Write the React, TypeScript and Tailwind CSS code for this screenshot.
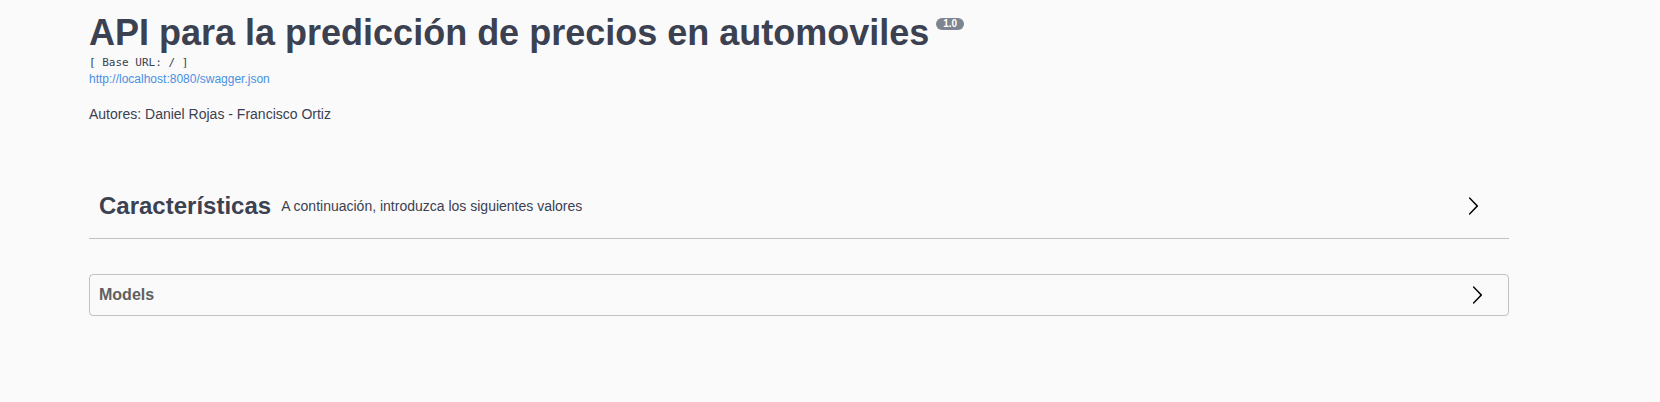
import React from 'react'

const sans = "font-['Liberation_Sans',Arial,sans-serif]"

function Chevron() {
  return (
    <svg width="20" height="20" viewBox="0 0 20 20" className="shrink-0">
      <path
        fill="#000"
        d="M13.25 10L6.109 2.58a.697.697 0 0 1 0-.979.68.68 0 0 1 .969 0l7.83 7.908a.697.697 0 0 1 0 .979l-7.83 7.908a.68.68 0 0 1-.969 0 .697.697 0 0 1 0-.979L13.25 10z"
      />
    </svg>
  )
}

export default function App() {
  return (
    <div className={`min-h-[402px] bg-[#fafafa] ${sans} text-[#3b4151]`}>
      <div className="ml-[89px] w-[1420px] pt-[12px]">
        {/* Info */}
        <div>
          <h2 className="flex items-start text-[36px] leading-[41px] font-bold m-0">
            <span>API para la predicción de precios en automoviles</span>
            <span className="ml-[7px] mt-[6px] h-[12px] rounded-full bg-[#7d8492] px-[7px] text-[10px] leading-[12px] text-white font-bold">
              1.0
            </span>
          </h2>
          <pre className="mt-[1px] font-['DejaVu_Sans_Mono','Liberation_Mono',monospace] text-[11px] leading-[17px] text-[#3b4151]">
            [ Base URL: / ]
          </pre>
          <a className="block text-[12px] leading-[16px] text-[#4990e2]">
            http://localhost:8080/swagger.json
          </a>
          <p className="mt-[19px] text-[14px] leading-[16px]">Autores: Daniel Rojas - Francisco Ortiz</p>
        </div>

        {/* Tag section */}
        <div className="mt-[52px] flex h-[65px] items-center border-b border-[rgba(59,65,81,0.3)] pl-[10px] pr-[26px]">
          <h3 className="text-[24px] font-bold leading-[28px]">Características</h3>
          <span className="flex-1 px-[10px] text-[14px]">A continuación, introduzca los siguientes valores</span>
          <Chevron />
        </div>

        {/* Models */}
        <div className="mt-[35px] rounded-[4px] border border-[rgba(59,65,81,0.3)]">
          <div className="flex h-[40px] items-center pl-[9px] pr-[21px]">
            <h4 className="flex-1 text-[16px] font-bold text-[#606060]">Models</h4>
            <Chevron />
          </div>
        </div>
      </div>
    </div>
  )
}
